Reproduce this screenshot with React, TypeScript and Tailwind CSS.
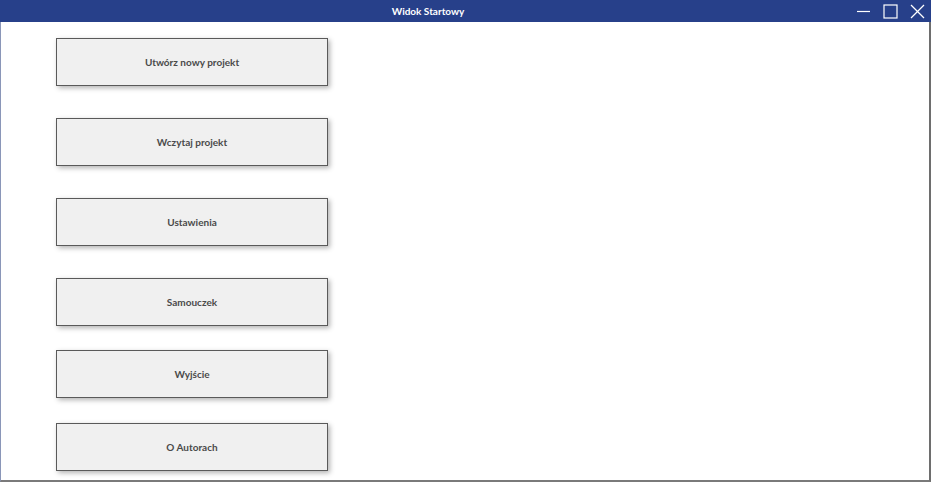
import React from "react";

const buttons: { label: string; mt: string }[] = [
  { label: "Utwórz nowy projekt", mt: "mt-[16px]" },
  { label: "Wczytaj projekt", mt: "mt-[32px]" },
  { label: "Ustawienia", mt: "mt-[32px]" },
  { label: "Samouczek", mt: "mt-[32px]" },
  { label: "Wyjście", mt: "mt-[24px]" },
  { label: "O Autorach", mt: "mt-[25px]" },
];

export default function App() {
  return (
    <div
      className="w-[931px] h-[482px] bg-white flex flex-col overflow-hidden"
      style={{ fontFamily: 'Lato, "Open Sans", sans-serif' }}
    >
      <div className="h-[22px] bg-[#27408a] flex items-center shrink-0">
        <div className="flex-1 text-center text-white text-[10px] font-bold leading-none">
          Widok Startowy
        </div>
        <div className="h-[22px] flex items-center gap-[12px] pr-[6px]">
          <svg width="15" height="15" viewBox="0 0 15 15">
            <line x1="1" y1="7.5" x2="14" y2="7.5" stroke="white" strokeWidth="1.2" />
          </svg>
          <svg width="15" height="15" viewBox="0 0 15 15">
            <rect x="1" y="1" width="13" height="13" fill="none" stroke="white" strokeWidth="1.2" />
          </svg>
          <svg width="15" height="15" viewBox="0 0 15 15">
            <line x1="1" y1="1" x2="14" y2="14" stroke="white" strokeWidth="1.3" />
            <line x1="14" y1="1" x2="1" y2="14" stroke="white" strokeWidth="1.3" />
          </svg>
        </div>
      </div>
      <div className="flex-1 flex flex-col border-l border-l-[#8a96b8] border-r-2 border-r-[#6e6e6e] border-b-2 border-b-[#7a7a7a] pl-[55px]">
        {buttons.map((b) => (
          <div
            key={b.label}
            className={`${b.mt} w-[272px] h-[48px] shrink-0 bg-[#f0f0f0] border border-[#5a5a5a] shadow-[2px_2px_5px_rgba(0,0,0,0.3)] flex items-center justify-center text-[10px] font-bold text-[#4a4a4a]`}
          >
            {b.label}
          </div>
        ))}
      </div>
    </div>
  );
}
